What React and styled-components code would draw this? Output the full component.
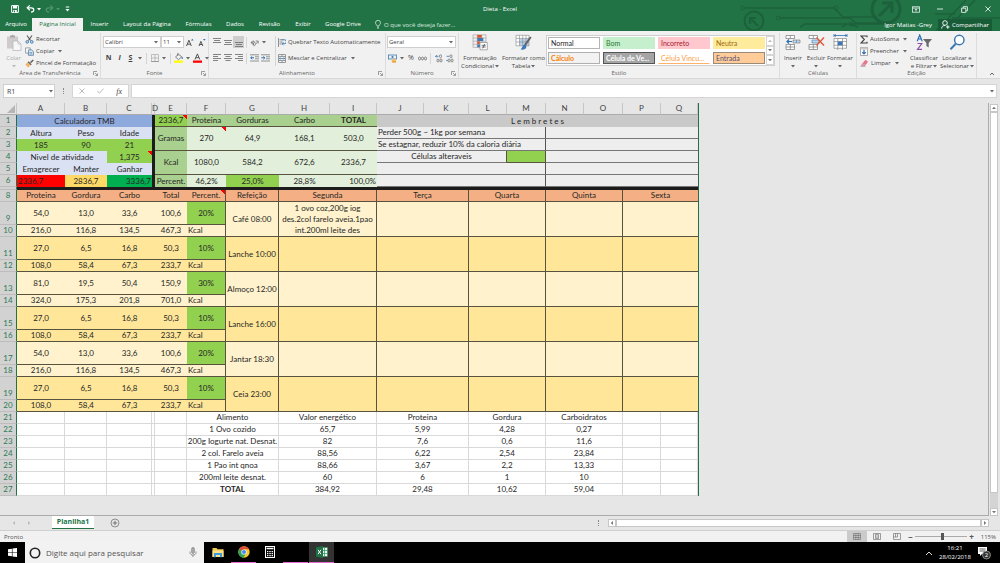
import React from "react";
import styled, { createGlobalStyle } from "styled-components";

const UI = `"Open Sans", "Noto Sans", sans-serif`;
const SHEET = `Lato, "Open Sans", sans-serif`;

const COLUMNS = [
  ["A", 48], ["B", 42], ["C", 45], ["D", 3], ["E", 32], ["F", 39],
  ["G", 53], ["H", 51], ["I", 47], ["J", 47], ["K", 45], ["L", 38],
  ["M", 39], ["N", 38], ["O", 39], ["P", 38], ["Q", 37],
];

const MEALS = [
  { name: "Café 08:00", grams: ["54,0", "13,0", "33,6", "100,6"], kcal: ["216,0", "116,8", "134,5", "467,3"], pct: "20%", monday: "1 ovo coz,200g iog\ndes.2col farelo aveia.1pao\nint.200ml leite des" },
  { name: "Lanche 10:00", grams: ["27,0", "6,5", "16,8", "50,3"], kcal: ["108,0", "58,4", "67,3", "233,7"], pct: "10%" },
  { name: "Almoço 12:00", grams: ["81,0", "19,5", "50,4", "150,9"], kcal: ["324,0", "175,3", "201,8", "701,0"], pct: "30%" },
  { name: "Lanche 16:00", grams: ["27,0", "6,5", "16,8", "50,3"], kcal: ["108,0", "58,4", "67,3", "233,7"], pct: "10%" },
  { name: "Jantar 18:30", grams: ["54,0", "13,0", "33,6", "100,6"], kcal: ["216,0", "116,8", "134,5", "467,3"], pct: "20%" },
  { name: "Ceia 23:00", grams: ["27,0", "6,5", "16,8", "50,3"], kcal: ["108,0", "58,4", "67,3", "233,7"], pct: "10%" },
];

const FOODS = [
  ["Alimento", "Valor energético", "Proteina", "Gordura", "Carboidratos"],
  ["1 Ovo cozido", "65,7", "5,99", "4,28", "0,27"],
  ["200g Iogurte nat. Desnat.", "82", "7,6", "0,6", "11,6"],
  ["2 col. Farelo aveia", "88,56", "6,22", "2,54", "23,84"],
  ["1 Pao int qnoa", "88,66", "3,67", "2,2", "13,33"],
  ["200ml leite desnat.", "60", "6", "1", "10"],
  ["TOTAL", "384,92", "29,48", "10,62", "59,04"],
];

const TABS = [
  ["Inserir", 33], ["Layout da Página", 62], ["Fórmulas", 41], ["Dados", 32],
  ["Revisão", 37], ["Exibir", 30], ["Google Drive", 50],
];

const STYLES = [
  { name: "Normal", bg: "#fff", color: "#222", edge: "#b5b5b5" },
  { name: "Bom", bg: "#c6efce", color: "#2a7a2e" },
  { name: "Incorreto", bg: "#ffc7ce", color: "#a8202c" },
  { name: "Neutra", bg: "#ffeb9c", color: "#9c6a10" },
  { name: "Cálculo", bg: "#f2f2f2", color: "#fa7d00", edge: "#b0b0b0", bold: true },
  { name: "Célula de Ve...", bg: "#a5a5a5", color: "#fff", edge: "#555", bold: true },
  { name: "Célula Vincu...", bg: "#fff", color: "#fa9a3c", under: "#ffb26b" },
  { name: "Entrada", bg: "#ffcc99", color: "#4f4f76", edge: "#9a8a78" },
];

/* ---------- icons ---------- */

const Svg = ({ w = 10, h = 10, box, children }) => (
  <svg width={w} height={h} viewBox={box || `0 0 ${w} ${h}`} fill="none" aria-hidden="true">
    {children}
  </svg>
);

const Caret = ({ color = "#666" }) => (
  <Svg w={4} h={3}><path d="M0 0h4L2 2.4z" fill={color} /></Svg>
);

const Launcher = () => (
  <Svg w={5} h={5}><path d="M.5 4V.5H4M2 2l2.3 2.3M4.5 2.3v2.2H2.3" stroke="#777" strokeWidth=".7" /></Svg>
);

const Lines = ({ y, widths, center, right }) => (
  <Svg w={8} h={10}>
    {widths.map((w, i) => {
      const x = right ? 8 - w : center ? (8 - w) / 2 : 0;
      return <rect key={i} x={x} y={y + i * 2} width={w} height=".9" fill="#777" />;
    })}
  </Svg>
);

const SaveIcon = () => (
  <Svg w={8} h={8}><path d="M.6.6h6.8v6.8H.6z" stroke="#fff" strokeWidth="1" /><path d="M2 .8h4v2.6H2zM2.2 5h3.6v2.4H2.2z" fill="#fff" /><path d="M3 5.6h1v1.6H3z" fill="#217346" /></Svg>
);

const UndoIcon = ({ color = "#fff", flip }) => (
  <Svg w={9} h={8}>
    <g transform={flip ? "translate(9 0) scale(-1 1)" : undefined}>
      <path d="M1.5 2.8h3.7c3.6.2 3.4 4-.2 4.3" stroke={color} strokeWidth="1.2" />
      <path d="M3.8.4L1.2 2.8l2.6 2.4" stroke={color} strokeWidth="1.2" />
    </g>
  </Svg>
);

const CustomizeIcon = () => (
  <Svg w={5} h={6}><path d="M.8 1h3.4" stroke="#fff" /><path d="M.5 3h4L2.5 5.4z" fill="#fff" /></Svg>
);

const RibbonOptionsIcon = () => (
  <Svg w={8} h={7}><rect x=".5" y=".8" width="7" height="5.4" stroke="#e7f1eb" strokeWidth=".8" /><path d="M.5 2.1h7M4 5.6V3M2.8 4.1L4 2.9l1.2 1.2" stroke="#e7f1eb" strokeWidth=".8" /></Svg>
);
const MinimizeIcon = () => <Svg w={6} h={6}><path d="M0 3h6" stroke="#d5e6dc" /></Svg>;
const RestoreIcon = () => (
  <Svg w={7} h={7}><path d="M.6 2.2h4.2v4.2H.6zM2.2 2.2V.7h4.2v4.1H4.8" stroke="#e7f1eb" strokeWidth=".9" /></Svg>
);
const CloseIcon = () => <Svg w={6} h={6}><path d="M.4.4l5.2 5.2M5.6.4L.4 5.6" stroke="#e7f1eb" strokeWidth=".9" /></Svg>;

const BulbIcon = () => (
  <Svg w={6} h={9}><path d="M2 6c0-1.2-1.5-1.6-1.5-3.2a2.5 2.5 0 015 0C5.500 4.400 4 4.800 4 6zM2 7.200h2M2.300 8.300h1.400" stroke="#d7e8de" strokeWidth=".8" /></Svg>
);
const PersonIcon = () => (
  <Svg w={9} h={9}><circle cx="4" cy="3" r="2.3" stroke="#fff" strokeWidth=".9" /><path d="M.6 8.600C.6 6.500 2 5.500 4 5.500M5 7h3.600M6.800 5.200v3.600" stroke="#fff" strokeWidth=".9" /></Svg>
);

const PasteIcon = () => (
  <Svg w={16} h={17}><path d="M1 2.500h11v12H1z" fill="#cfcacb" /><path d="M4 3.500V1.500h1.500a1.200 1.200 0 012.200 0H9v2z" fill="#aaa5a6" /><path d="M7 7h5l3 3v6.500H7z" fill="#f7f7f7" stroke="#b9b9bf" strokeWidth=".8" /><path d="M12 7v3h3" stroke="#b9b9bf" strokeWidth=".8" /></Svg>
);
const CutIcon = () => (
  <Svg w={9} h={9}><path d="M2 .5l3.600 5M7 .5L3.400 5.500" stroke="#555" strokeWidth="1.100" /><circle cx="2.200" cy="6.900" r="1.300" stroke="#3d78b5" strokeWidth="1" /><circle cx="6.800" cy="6.900" r="1.300" stroke="#3d78b5" strokeWidth="1" /></Svg>
);
const CopyIcon = () => (
  <Svg w={9} h={9}><path d="M.6.9h4.600v5.200H.6z" fill="#fff" stroke="#7f8a96" strokeWidth=".8" /><path d="M3.400 2.900h3.200l1.800 1.700v3.700h-5z" fill="#dce9f5" stroke="#55789c" strokeWidth=".8" /><path d="M4.500 5.500h2.600M4.500 6.900h2.600" stroke="#3d78b5" strokeWidth=".6" /></Svg>
);
const BrushIcon = () => (
  <Svg w={9} h={9}><path d="M8.300 1L5.500 3.600" stroke="#666" strokeWidth="1.600" /><path d="M3.500 2.200l3.200 3.200-1 .8-3-3z" fill="#555" /><path d="M2.600 3.300L5.500 6 3.200 8.500.4 5.600z" fill="#f0b168" /></Svg>
);

const GrowIcon = ({ down }) => (
  <Svg w={8} h={9}><path d={down ? "M1 8l1.900-4.600L4.800 8M1.700 6.500h2.400" : "M.5 8l2.400-5.800L5.300 8M1.300 6.200h3.200"} stroke="#444" strokeWidth=".9" /><path d={down ? "M5 1h2.600L6.300 2.700z" : "M5 2.600h2.600L6.300.8z"} fill="#2b6fb3" /></Svg>
);
const BorderIcon = () => (
  <Svg w={8} h={8}><path d="M.5.5h7v7h-7zM4 .5v7M.5 4h7" stroke="#aaa" strokeWidth=".7" /><path d="M.2 7.500h7.600" stroke="#999" /></Svg>
);
const FillIcon = () => (
  <Svg w={10} h={10}><path d="M4.500 1.200L1.500 4l3 2.600 3.200-2.800zM3.800 0v3" stroke="#666" strokeWidth=".8" /><path d="M8 3.500c1.200 1.400 1.200 2.300.3 2.500-.9-.1-.9-1 -.3-2.500z" fill="#2b6fb3" /><path d="M0 7.500h9v2.300H0z" fill="#ffff00" /></Svg>
);
const FontColorIcon = () => (
  <Svg w={9} h={10}><path d="M2 6.500l2.400-5.600 2.400 5.600M2.800 4.700H6" stroke="#555" strokeWidth="1" /><path d="M0 7.500h9v2.300H0z" fill="#f00" /></Svg>
);
const OrientationIcon = () => (
  <Svg w={9} h={9}><path d="M1 4.500l3 2.800M2.800 2.600l2.800 2.600M1.200 4.600c0-1.800 3-.2 2.400 2" stroke="#555" strokeWidth=".9" /><path d="M4 8.300l4-5M8.200 5.500V3H5.700" stroke="#777" strokeWidth=".8" /></Svg>
);
const IndentIcon = ({ out }) => (
  <Svg w={9} h={8}><path d="M0 .8h9M5 2.800h4M5 4.800h4M0 7h9" stroke="#888" strokeWidth=".9" /><path d={out ? "M4 3.800H.8M2.200 2.400L.7 3.800l1.500 1.400" : "M.3 3.800h3.400M2.400 2.400l1.500 1.400-1.500 1.400"} stroke="#2b6fb3" strokeWidth="1" /></Svg>
);
const WrapIcon = () => (
  <Svg w={8} h={9}><path d="M.5 0v9M1.500 1.800h3.200M1.500 4h3M1.500 6h2" stroke="#777" strokeWidth=".8" /><path d="M3.500 1.800h3a1.200 1.200 0 010 3.900H4.300M5.400 4.300L4 5.700 5.400 7" stroke="#2b6fb3" strokeWidth=".9" /></Svg>
);
const MergeIcon = () => (
  <Svg w={8} h={9}><path d="M.5.5h7v8h-7zM.5 2.500h7M.5 6.500h7M4 .5v2M4 6.500v2" stroke="#777" strokeWidth=".7" /><path d="M1.300 4.500h5.400M2.400 3.500l-1.100 1 1.100 1M5.600 3.500l1.100 1-1.100 1" stroke="#2b6fb3" strokeWidth=".7" /></Svg>
);
const MoneyIcon = () => (
  <Svg w={9} h={9}><rect x=".5" y="1" width="8" height="4" stroke="#3d78b5" strokeWidth=".8" /><circle cx="4.500" cy="3" r="1.100" fill="#3d78b5" /><ellipse cx="6" cy="6" rx="2.400" ry="1" fill="#f3bf63" /><ellipse cx="6" cy="7.700" rx="2.400" ry="1" fill="#e9a53c" /></Svg>
);
const DecimalIcon = ({ less }) => (
  <Svg w={8} h={9}><rect x={less ? 4 : 4.500} y=".8" width="2" height="2.800" rx="1" stroke="#666" strokeWidth=".7" /><rect x="2" y="5" width="2" height="3" rx="1" stroke="#666" strokeWidth=".7" /><rect x="5" y="5" width="2" height="3" rx="1" stroke="#666" strokeWidth=".7" /><path d={less ? "M.3 6.500h1.400M.6 2.300h2.600" : "M3.500 2.300H.6M1.700 1.200L.6 2.300l1.100 1.100"} stroke="#2b6fb3" strokeWidth=".8" /></Svg>
);

const CondIcon = () => (
  <Svg w={16} h={17}><path d="M1 .8h13v12.600H1zM1 4h13M1 7.200h13M1 10.300h13M5.300.8v12.600M9.700.8v12.600" stroke="#999" strokeWidth=".6" /><path d="M5.300 1h4.400v2.800H5.300zM5.300 7.300h2.500V10H5.300z" fill="#d9532f" /><path d="M5.300 4.100h6v2.800h-6zM5.300 10.400h3v2.800h-3z" fill="#3d78b5" /><path d="M8 8.500h7.300v7.300H8z" fill="#fff" stroke="#888" strokeWidth=".7" /><path d="M9.700 11.300h4M9.700 13h4M12.700 10l-2 4.400" stroke="#444" strokeWidth=".7" /></Svg>
);
const FormatTableIcon = () => (
  <Svg w={17} h={17}><path d="M1 1.300h13v10.500H1z" fill="#fff" /><path d="M4.500 4.500H14v7.300H4.500z" fill="#b8d2ec" /><path d="M1 1.300h13v10.500H1zM1 4.400h13M1 8h13M4.500 1.300v10.500M7.700 1.300v10.500M11 1.300v10.500" stroke="#888" strokeWidth=".6" /><path d="M15.800 3L10 11.200" stroke="#666" strokeWidth="2" /><path d="M9.500 10.500c2 .2 2.300 2 1.500 3.500-1 1.700-4 2-5.500 1.300 1.800-.8 1.500-4 4-4.800z" fill="#3d78b5" /></Svg>
);
const InsertCellsIcon = () => (
  <Svg w={16} h={17}><path d="M1 1.500h8.500v3H1zM5.300 1.500v3M1 10.500h8.500v5H1zM5.300 10.500v5M1 13h8.500" fill="#fff" stroke="#777" strokeWidth=".7" /><path d="M8 6h7v3H8z" fill="#bdd6ee" stroke="#777" strokeWidth=".6" /><path d="M11.500 6v3" stroke="#777" strokeWidth=".6" /><path d="M7 7.500H2M4 5.500l-2 2 2 2" stroke="#2b6fb3" strokeWidth="1.200" /></Svg>
);
const DeleteCellsIcon = () => (
  <Svg w={17} h={17}><path d="M1 1.500h8.500v3H1zM5.300 1.500v3M1 10.500h8.500v5H1zM5.300 10.500v5M1 13h8.500" fill="#fff" stroke="#777" strokeWidth=".7" /><path d="M4 6h7v3H4z" fill="#bdd6ee" stroke="#3d78b5" strokeWidth=".6" /><path d="M8.500 3.500l7.500 8M16 3.500l-7.500 8" stroke="#dd5a38" strokeWidth="1.400" /></Svg>
);
const FormatCellsIcon = () => (
  <Svg w={15} h={17}><path d="M1 1.500h13M1 0v3M14 0v3M3 .5l-1.500 1L3 2.500M12 .5l1.500 1-1.500 1" stroke="#2b6fb3" strokeWidth=".8" /><path d="M1 4.500h12.500v9.500l-3 2-2-1.500H1z" fill="#fff" /><path d="M1 4.500h12.500v9.800H1zM1 7.500h12.500M1 11.300h12.500M4.800 4.500v11.500M9.500 4.500v11.500" stroke="#888" strokeWidth=".7" /><path d="M4.800 7.500h4.700v3.800H4.800z" fill="#3d78b5" /></Svg>
);
const SumIcon = () => <Svg w={8} h={9}><path d="M7 2.300V1H1l3.300 3.500L1 8h6V6.700" stroke="#444" strokeWidth="1.200" /></Svg>;
const DownFillIcon = () => (
  <Svg w={8} h={9}><path d="M.5.5h7v8h-7z" fill="#fff" stroke="#888" strokeWidth=".7" /><path d="M.5.500h7v2h-7z" fill="#c9c9c9" /><path d="M4 2.800v4M2.200 5.200L4 7l1.800-1.800" stroke="#2b6fb3" strokeWidth="1.200" /></Svg>
);
const EraserIcon = () => (
  <Svg w={9} h={8}><path d="M5.500.8l2.500 2-2.600 3.400-2.800-2z" fill="#e5738a" /><path d="M2.200 4.500L5 6.500H1.500z" fill="#f3b3c0" stroke="#d0607a" strokeWidth=".5" /><path d="M.5 7.300h5" stroke="#888" strokeWidth=".7" /></Svg>
);
const SortIcon = () => (
  <Svg w={17} h={17}><path d="M1.200 7.200L3.700 1l2.500 6.200M2 5h3.400" stroke="#2b6fb3" strokeWidth="1.200" /><path d="M1.500 9.500h4.300L1.500 15.300h4.500" stroke="#8a52a8" strokeWidth="1.200" /><path d="M7 5h9l-3.300 4v4.500l-2.300-1.500V9z" fill="#6a6a6a" /></Svg>
);
const FindIcon = () => (
  <Svg w={17} h={17}><circle cx="10.300" cy="6" r="4.700" fill="#fff" stroke="#3d78b5" strokeWidth="1.500" /><path d="M7 9.500L1.500 15.300" stroke="#3d78b5" strokeWidth="2" /></Svg>
);

const FolderIcon = () => (
  <Svg w={12} h={11}><path d="M.5 1h4l1 1.300h6V10H.5z" fill="#f5ca55" /><path d="M.5 3.500h11V10H.5z" fill="#fbe08a" /><path d="M2 6h8v4.300H8V8H4v2.300H2z" fill="#3d9bdc" /></Svg>
);
const ChromeIcon = () => (
  <Svg w={12} h={12}><circle cx="6" cy="6" r="5.700" fill="#f6c927" /><path d="M6 6L1 3.300A5.700 5.700 0 0111 3.300H6z" fill="#dd4b3e" /><path d="M1 3.300A5.700 5.700 0 005.500 11.700L8 7.500 6 6z" fill="#2ea25a" /><circle cx="6" cy="6" r="2.600" fill="#fff" /><circle cx="6" cy="6" r="2" fill="#4285f4" /></Svg>
);
const CalcIcon = () => (
  <Svg w={10} h={12}><rect x=".5" y=".5" width="9" height="11" stroke="#fff" /><path d="M1.500 2.500h7" stroke="#fff" strokeWidth="1.500" />{[5, 7, 9].map((y) => [2, 4.300, 6.600].map((x) => <rect key={`${x}-${y}`} x={x} y={y} width="1.400" height="1.200" fill="#fff" />))}</Svg>
);
const ExcelIcon = () => (
  <Svg w={12} h={12}><path d="M6 1.500h5.500v9H6z" fill="#e9f5ee" stroke="#2f8f5b" strokeWidth=".7" /><path d="M8.500 1.500v9M6 4.500h5.500M6 7.500h5.500" stroke="#2f8f5b" strokeWidth=".7" /><path d="M0 1.300L7 0v12L0 10.700z" fill="#1e7145" /><path d="M2 3.800l3 4.400M5 3.800L2 8.200" stroke="#fff" strokeWidth="1" /></Svg>
);
const WindowsIcon = () => (
  <Svg w={9} h={9}><path d="M0 1.300L3.900.7v3.500H0zM4.500.6L9 0v4.200H4.500zM0 4.800h3.900v3.500L0 7.700zM4.500 4.800H9V9l-4.500-.6z" fill="#fff" /></Svg>
);
const MicIcon = () => (
  <Svg w={8} h={11}><rect x="2.600" y=".5" width="2.800" height="6" rx="1.400" fill="#aaa" stroke="#777" strokeWidth=".6" /><path d="M1 4.500v1c0 3.500 6 3.500 6 0v-1M4 8.300V10" stroke="#777" strokeWidth=".8" /></Svg>
);

/* ---------- base ---------- */

const GlobalStyle = createGlobalStyle`
  * { box-sizing: border-box; }
  body {
    margin: 0;
    background: #e6e6e6;
    font-family: ${UI};
    font-size: 6px;
    color: #444;
  }
  svg { display: block; flex: none; }
  button, input, select {
    margin: 0;
    padding: 0;
    border: none;
    border-radius: 0;
    background: none;
    font: inherit;
    color: inherit;
    outline: none;
  }
`;

const App = styled.div`
  min-height: 100vh;
  display: flex;
  flex-direction: column;
`;

/* ---------- header ---------- */

const Header = styled.header`
  position: relative;
  background: #217346;
  color: #fff;
`;

const Circuit = styled.svg`
  position: absolute;
  top: 0;
  right: 0;
`;

const TitleBar = styled.div`
  position: relative;
  display: grid;
  grid-template-columns: 1fr auto 1fr;
  align-items: center;
  height: 18px;
`;

const QuickAccess = styled.div`
  display: flex;
  align-items: center;
  gap: 3px;
  padding-left: 11px;
`;

const QuickButton = styled.button`
  display: flex;
  align-items: center;
  gap: 2px;
  margin-right: ${(p) => p.$after || 0}px;
`;

const WindowButtons = styled.div`
  display: flex;
  justify-content: flex-end;
`;

const WindowButton = styled.button`
  width: 24px;
  height: 16px;
  display: grid;
  place-items: center;
`;

const TabBar = styled.nav`
  position: relative;
  display: flex;
  align-items: stretch;
  height: 13px;
`;

const Tab = styled.button`
  width: ${(p) => p.$width}px;
  line-height: 13px;
  text-align: center;
  white-space: nowrap;
  color: ${(p) => (p.$active ? "#217346" : "#fff")};
  background: ${(p) => (p.$active ? "#f1f1f1" : "transparent")};
`;

const TellMe = styled.button`
  display: flex;
  align-items: center;
  gap: 3px;
  padding-left: 7px;
  color: #d7e8de;
`;

const Account = styled.div`
  margin-left: auto;
  display: flex;
  align-items: center;
  gap: 6px;
  padding-right: 8px;
`;

const ShareButton = styled.button`
  display: flex;
  align-items: center;
  justify-content: center;
  gap: 2px;
  width: 54px;
  height: 12px;
  background: #185c37;
`;

/* ---------- ribbon ---------- */

const Ribbon = styled.section`
  display: flex;
  height: 48px;
  padding-top: 2px;
  background: #f1f1f1;
  border-bottom: 1px solid #d8d8d8;
`;

const Group = styled.div`
  flex: none;
  display: flex;
  flex-direction: column;
  width: ${(p) => p.$width}px;
  border-right: 1px solid #dcdcdc;
`;

const GroupBody = styled.div`
  display: flex;
  height: 36px;
  padding-left: ${(p) => p.$left || 0}px;
`;

const GroupCaption = styled.div`
  display: grid;
  grid-template-columns: 10px 1fr 10px;
  align-items: center;
  height: 9px;
  color: #666;
  line-height: 9px;
  text-align: center;

  svg { justify-self: center; }
`;

const Stack = styled.div`
  flex: none;
  display: flex;
  flex-direction: column;
  gap: ${(p) => p.$gap || 0}px;
  width: ${(p) => (p.$width ? `${p.$width}px` : "auto")};
  padding-top: ${(p) => p.$top || 0}px;
`;

const Line = styled.div`
  display: flex;
  align-items: center;
  height: 12px;
`;

const SmallButton = styled.button`
  display: flex;
  align-items: center;
  gap: 2px;
  height: 12px;
  white-space: nowrap;

  svg + span { margin-right: 2px; }
`;

const IconButton = styled.button`
  width: ${(p) => p.$width || 11}px;
  height: 12px;
  display: grid;
  place-items: center;
  background: ${(p) => (p.$on ? "#cdcdcd" : "transparent")};
  font-size: 7px;
  line-height: 12px;
  font-weight: ${(p) => (p.$bold ? 700 : 400)};
  font-style: ${(p) => (p.$italic ? "italic" : "normal")};
  text-decoration: ${(p) => (p.$underline ? "underline" : "none")};
`;

const CaretButton = styled(IconButton)`
  width: 8px;
`;

const Divider = styled.span`
  width: 1px;
  height: ${(p) => p.$height || 11}px;
  margin: 0 2px;
  background: #d5d5d5;
`;

const BigButton = styled.button`
  flex: none;
  display: flex;
  flex-direction: column;
  align-items: center;
  width: ${(p) => p.$width}px;
  padding-top: 1px;
  color: ${(p) => (p.$dim ? "#aaa" : "#444")};
  line-height: 8px;
  white-space: nowrap;

  > svg:first-child { margin-bottom: 3px; }
  > svg:last-child { margin-top: 3px; }
`;

const WithCaret = styled.span`
  display: flex;
  align-items: center;
  gap: 1px;
`;

const SelectBox = styled.label`
  position: relative;
  display: flex;
  align-items: center;
  width: ${(p) => p.$width}px;
  height: 12px;
  background: #fff;
  border: 1px solid #cfcfcf;

  select {
    width: 100%;
    height: 10px;
    padding-left: 1px;
    appearance: none;
    line-height: 10px;
  }

  svg {
    position: absolute;
    right: 2px;
    pointer-events: none;
  }
`;

const Gallery = styled.div`
  display: flex;
  height: 31px;
  margin-top: 2px;
  border: 1px solid #cfcfcf;
  background: #fff;
`;

const GalleryGrid = styled.div`
  display: grid;
  grid-template-columns: repeat(4, 52px);
  grid-auto-rows: 12px;
  gap: 3px;
  padding: 1px;
`;

const StyleButton = styled.button`
  padding-left: 2px;
  text-align: left;
  font-family: ${SHEET};
  font-size: 7px;
  line-height: 9px;
  white-space: nowrap;
  color: ${(p) => p.$color};
  background: ${(p) => p.$bg};
  font-weight: ${(p) => (p.$bold ? 700 : 400)};
  border: 1px solid ${(p) => p.$edge || "transparent"};
  border-bottom-color: ${(p) => p.$under || p.$edge || "transparent"};
`;

const GalleryScroll = styled.div`
  display: grid;
  grid-template-rows: repeat(3, 1fr);
  width: 8px;

  button {
    display: grid;
    place-items: center;
    border: 1px solid #d5d5d5;
  }
`;

const Collapse = styled.button`
  margin: auto 5px 1px auto;
`;

/* ---------- formula bar ---------- */

const FormulaBar = styled.section`
  display: flex;
  align-items: flex-start;
  height: 24px;
  padding: 5px 3px 0;
`;

const NameBox = styled.div`
  display: flex;
  align-items: center;
  width: 52px;
  height: 14px;
  padding: 0 2px 0 3px;
  background: #fff;
  border: 1px solid #cfcfcf;

  input { width: 42px; font-size: 7px; }
`;

const Dots = styled.span`
  align-self: center;
  width: 1px;
  height: 6px;
  border-left: 1px dotted #888;
`;

const FormulaDots = styled(Dots)`
  align-self: flex-start;
  margin: 4px 8px;
`;

const FormulaActions = styled.div`
  display: flex;
  align-items: center;
  justify-content: space-around;
  width: 57px;
  height: 14px;
  background: #fff;
  border: 1px solid #d5d5d5;
  font-family: "Liberation Serif", serif;
  font-size: 8px;
  font-style: italic;
`;

const FormulaField = styled.div`
  flex: 1;
  display: flex;
  align-items: center;
  height: 14px;
  margin-left: 2px;
  padding-right: 2px;
  background: #fff;
  border: 1px solid #d5d5d5;

  input { flex: 1; }
`;

/* ---------- sheet ---------- */

const Workspace = styled.main`
  flex: 1;
  display: flex;
`;

const SheetArea = styled.div`
  flex: 1;
  border-right: 1px solid #ababab;
  border-bottom: 1px solid #ababab;
`;

const Sheet = styled.table`
  width: 699px;
  table-layout: fixed;
  border-collapse: separate;
  border-spacing: 0;
  border-right: 1px solid #217346;
  font-family: ${SHEET};
  font-size: 8px;
  line-height: 11px;
  color: #262626;

  th, td {
    padding: 0;
    font-weight: 400;
    white-space: nowrap;
  }
`;

const ColHead = styled.th`
  height: 12px;
  color: #444;
  background: #e6e6e6;
  border-right: 1px solid #c6c6c6;
  border-bottom: 1px solid #ababab;
`;

const RowHead = styled.th`
  height: ${(p) => p.$height}px;
  vertical-align: bottom;
  line-height: ${(p) => (p.$height < 11 ? 1 : 11)}px;
  color: #2f7a55;
  background: #d2d2d2;
  border-right: 1px solid #217346;
  border-bottom: 1px solid #bdbdbd;
`;

const INK = "#57533f";

/* filled cells hide the gridlines unless a border colour is given */
const edge = (color, bg) => {
  if (color) return `1px solid ${color}`;
  return bg ? "none" : "1px solid #d9d9d9";
};

const Cell = styled.td`
  text-align: ${(p) => p.$align || "center"};
  vertical-align: middle;
  background: ${(p) => p.$bg || "#fff"};
  border-bottom: ${(p) => edge(p.$bottom, p.$bg)};
  border-right: ${(p) => edge(p.$right, p.$bg)};

  &&& {
    padding: 0 ${(p) => (p.$align ? 1 : 0)}px;
    font-weight: ${(p) => (p.$bold ? 700 : 400)};
    white-space: ${(p) => (p.$wrap ? "pre" : "nowrap")};
  }
`;

/* red corner shown on cells that carry a comment */
const NotedCell = styled(Cell)`
  background: linear-gradient(45deg, transparent 50%, #f00 50%) top right / 4px 4px no-repeat
    ${(p) => p.$bg};
`;

const ScrollColumn = styled.div`
  display: flex;
  flex-direction: column;
  width: 11px;
  padding: 1px 2px 0 1px;
`;

const ScrollButton = styled.button`
  flex: none;
  width: 8px;
  height: 8px;
  display: grid;
  place-items: center;
  background: #fff;
  border: 1px solid #c6c6c6;
`;

const ScrollTrackV = styled.div`
  flex: 1;
  padding-bottom: 15px;
  background: #d4d4d4;
`;

const ScrollThumb = styled.div`
  height: 100%;
  background: #fff;
  border: 1px solid #c6c6c6;
`;

const SheetTabs = styled.div`
  display: flex;
  align-items: stretch;
  height: 15px;
  padding: 0 11px 0 12px;
  border-bottom: 1px solid #cfcfcf;
`;

const TabArrows = styled.div`
  display: flex;
  align-items: center;
  gap: 11px;
  width: 40px;
`;

const SheetTab = styled.button`
  width: 42px;
  height: 13px;
  background: #fff;
  border-bottom: 1px solid #217346;
  color: #217346;
  font-size: 7px;
  font-weight: 700;
  line-height: 12px;
`;

const AddSheet = styled.button`
  margin-left: 16px;
`;

const ScrollRow = styled.div`
  display: flex;
  align-items: center;
  width: 40%;
  margin-left: auto;

  ${Dots} { margin-right: 9px; }
`;

const ScrollTrackH = styled.div`
  flex: 1;
  height: 8px;
`;

const StatusBar = styled.footer`
  display: flex;
  align-items: center;
  height: 11px;
  padding: 0 4px;
  background: #f1f1f1;
  color: #555;
`;

const ViewButton = styled.button`
  width: 20px;
  height: 11px;
  display: grid;
  place-items: center;
  background: ${(p) => (p.$on ? "#cbcbcb" : "transparent")};
`;

const Views = styled.div`
  display: flex;
  margin-left: auto;
`;

const Zoom = styled.div`
  display: flex;
  align-items: center;
  gap: 1px;
  width: 89px;

  button { width: 7px; font-size: 8px; font-weight: 700; line-height: 9px; }

  input {
    width: 52px;
    height: 9px;
    appearance: none;
    background: linear-gradient(#aaa, #aaa) center / 100% 1px no-repeat;
  }

  input::-webkit-slider-thumb {
    appearance: none;
    width: 3px;
    height: 7px;
    background: #555;
  }

  output { margin-left: auto; }
`;

/* ---------- taskbar ---------- */

const Taskbar = styled.div`
  display: flex;
  height: 21px;
  background: #000;
  color: #fff;
`;

const StartButton = styled.button`
  width: 25px;
  display: grid;
  place-items: center;
`;

const Search = styled.div`
  display: flex;
  align-items: center;
  gap: 5px;
  width: 179px;
  padding: 0 7px 0 4px;
  background: #f2f2f2;
  color: #555;

  input { flex: 1; min-width: 0; font-size: 8px; }
  input::placeholder { color: #555; opacity: 1; }
`;

const Apps = styled.div`
  display: flex;
  gap: 1px;
  padding-left: 1px;
`;

const AppButton = styled.button`
  width: 25px;
  display: grid;
  place-items: center;
  background: ${(p) => (p.$active ? "#333" : "transparent")};
  border-bottom: 1px solid ${(p) => (p.$open ? "#e56bd0" : "transparent")};
`;

const Tray = styled.div`
  display: flex;
  align-items: center;
  margin-left: auto;
  padding-right: 8px;
`;

const Clock = styled.time`
  width: 44px;
  font-size: 6px;
  line-height: 9px;
  text-align: center;
`;

/* ---------- pieces ---------- */

const Caption = ({ children, launcher }) => (
  <GroupCaption>
    <span />
    <span>{children}</span>
    {launcher ? <Launcher /> : <span />}
  </GroupCaption>
);

const DropDown = ({ label, value, width }) => (
  <SelectBox $width={width}>
    <select aria-label={label} defaultValue={value}>
      <option>{value}</option>
    </select>
    <Caret />
  </SelectBox>
);

const Tool = ({ icon, label, caret }) => (
  <SmallButton>
    {icon}
    <span>{label}</span>
    {caret && <Caret />}
  </SmallButton>
);

const Arrow = ({ dir, color = "#777" }) => {
  const d = { left: "M3 0v4L.8 2z", right: "M1 0v4l2.200-2z", up: "M0 3h4L2 .8z", down: "M0 1h4L2 3.200z" };
  return <Svg w={4} h={4}><path d={d[dir]} fill={color} /></Svg>;
};

const HeaderArea = () => (
  <Header>
    <Circuit width="270" height="31" viewBox="0 0 270 31" fill="none" stroke="#1c613b" aria-hidden="true">
      <path d="M16 8h88l9 9h34M50 18h70l6 5h34M70 27l5-3h45l8 3M112 27l5-3h42l10 3" strokeWidth="1.500" />
      <circle cx="13" cy="8" r="2" /><circle cx="106" cy="8" r="2" /><circle cx="48" cy="18" r="2" /><circle cx="121" cy="24" r="2" />
      <circle cx="24" cy="21" r="9.500" strokeWidth="2" />
      <path d="M28 26l-8-8M20 24v-6h6" strokeWidth="2" />
      <circle cx="156" cy="9" r="14" strokeWidth="3" />
      <path d="M149 16l13-13M152 3h10v10" strokeWidth="3" />
      <path d="M206 31l30-31M215 31l30-31M222 18h48M205 14h20" strokeWidth="1.500" />
    </Circuit>
    <TitleBar>
      <QuickAccess>
        <QuickButton $after={4} aria-label="Salvar"><SaveIcon /></QuickButton>
        <QuickButton $after={1} aria-label="Desfazer"><UndoIcon /><Caret color="#fff" /></QuickButton>
        <QuickButton $after={2} aria-label="Refazer"><UndoIcon color="#4f9470" flip /><Caret color="#4f9470" /></QuickButton>
        <QuickButton aria-label="Personalizar"><CustomizeIcon /></QuickButton>
      </QuickAccess>
      <span>Dieta - Excel</span>
      <WindowButtons>
        <WindowButton aria-label="Opções da faixa"><RibbonOptionsIcon /></WindowButton>
        <WindowButton aria-label="Minimizar"><MinimizeIcon /></WindowButton>
        <WindowButton aria-label="Restaurar"><RestoreIcon /></WindowButton>
        <WindowButton aria-label="Fechar"><CloseIcon /></WindowButton>
      </WindowButtons>
    </TitleBar>
    <TabBar>
      <Tab $width={32}>Arquivo</Tab>
      <Tab $width={51} $active>Página Inicial</Tab>
      {TABS.map(([name, width]) => (
        <Tab key={name} $width={width}>{name}</Tab>
      ))}
      <TellMe><BulbIcon />O que você deseja fazer...</TellMe>
      <Account>
        <span>Igor Matias -Grey</span>
        <ShareButton><PersonIcon />Compartilhar</ShareButton>
      </Account>
    </TabBar>
  </Header>
);

const RibbonArea = () => (
  <Ribbon>
    <Group $width={101}>
      <GroupBody $left={2}>
        <BigButton $width={23} $dim><PasteIcon /><span>Colar</span><Caret color="#bbb" /></BigButton>
        <Stack>
          <Tool icon={<CutIcon />} label="Recortar" />
          <Tool icon={<CopyIcon />} label="Copiar" caret />
          <Tool icon={<BrushIcon />} label="Pincel de Formatação" />
        </Stack>
      </GroupBody>
      <Caption launcher>Área de Transferência</Caption>
    </Group>

    <Group $width={108}>
      <GroupBody $left={2}>
        <Stack $top={3} $gap={4}>
          <Line>
            <DropDown label="Fonte" value="Calibri" width={58} />
            <DropDown label="Tamanho" value="11" width={23} />
            <IconButton $width={12} aria-label="Aumentar fonte"><GrowIcon /></IconButton>
            <IconButton aria-label="Diminuir fonte"><GrowIcon down /></IconButton>
          </Line>
          <Line>
            <IconButton $bold>N</IconButton>
            <IconButton $italic $bold>I</IconButton>
            <IconButton $underline $bold>S</IconButton>
            <CaretButton aria-label="Sublinhado"><Caret /></CaretButton>
            <Divider />
            <IconButton aria-label="Bordas"><BorderIcon /></IconButton>
            <CaretButton aria-label="Mais bordas"><Caret /></CaretButton>
            <Divider />
            <IconButton aria-label="Preenchimento"><FillIcon /></IconButton>
            <CaretButton aria-label="Mais cores"><Caret /></CaretButton>
            <IconButton aria-label="Cor da fonte"><FontColorIcon /></IconButton>
            <CaretButton aria-label="Mais cores de fonte"><Caret /></CaretButton>
          </Line>
        </Stack>
      </GroupBody>
      <Caption launcher>Fonte</Caption>
    </Group>

    <Group $width={177}>
      <GroupBody $left={2}>
        <Stack $top={3} $gap={4} $width={62}>
          <Line>
            <IconButton aria-label="Em cima"><Lines y={1} widths={[8, 6, 8]} center /></IconButton>
            <IconButton aria-label="No meio"><Lines y={3} widths={[8, 6, 8]} center /></IconButton>
            <IconButton $on aria-label="Embaixo"><Lines y={5} widths={[8, 6, 8]} center /></IconButton>
            <Divider />
            <IconButton aria-label="Orientação"><OrientationIcon /></IconButton>
            <CaretButton aria-label="Mais orientações"><Caret /></CaretButton>
          </Line>
          <Line>
            <IconButton aria-label="À esquerda"><Lines y={1} widths={[8, 5, 8, 5]} /></IconButton>
            <IconButton aria-label="Centralizar"><Lines y={1} widths={[8, 5, 8, 5]} center /></IconButton>
            <IconButton aria-label="À direita"><Lines y={1} widths={[8, 5, 8, 5]} right /></IconButton>
            <Divider />
            <IconButton aria-label="Diminuir recuo"><IndentIcon out /></IconButton>
            <IconButton aria-label="Aumentar recuo"><IndentIcon /></IconButton>
          </Line>
        </Stack>
        <Stack $top={3}><Divider $height={30} /></Stack>
        <Stack $top={3} $gap={4}>
          <Line><Tool icon={<WrapIcon />} label="Quebrar Texto Automaticamente" /></Line>
          <Line><Tool icon={<MergeIcon />} label="Mesclar e Centralizar" caret /></Line>
        </Stack>
      </GroupBody>
      <Caption launcher>Alinhamento</Caption>
    </Group>

    <Group $width={73}>
      <GroupBody $left={1}>
        <Stack $top={3} $gap={4}>
          <Line><DropDown label="Formato de número" value="Geral" width={69} /></Line>
          <Line>
            <IconButton aria-label="Moeda"><MoneyIcon /></IconButton>
            <CaretButton aria-label="Mais moedas"><Caret /></CaretButton>
            <IconButton $width={10}>%</IconButton>
            <IconButton $width={12} aria-label="Milhares"><Svg w={9} h={5}><path d="M1.500 1a1 1.500 0 100 3 1 1.500 0 100-3M4.500 1a1 1.500 0 100 3 1 1.500 0 100-3M7.500 1a1 1.500 0 100 3 1 1.500 0 100-3" stroke="#666" strokeWidth=".8" /></Svg></IconButton>
            <Divider />
            <IconButton aria-label="Aumentar casas"><DecimalIcon /></IconButton>
            <IconButton aria-label="Diminuir casas"><DecimalIcon less /></IconButton>
          </Line>
        </Stack>
      </GroupBody>
      <Caption launcher>Número</Caption>
    </Group>

    <Group $width={321}>
      <GroupBody>
        <BigButton $width={42}>
          <CondIcon /><span>Formatação</span><WithCaret>Condicional<Caret /></WithCaret>
        </BigButton>
        <BigButton $width={45}>
          <FormatTableIcon /><span>Formatar como</span><WithCaret>Tabela<Caret /></WithCaret>
        </BigButton>
        <Gallery>
          <GalleryGrid>
            {STYLES.map((s) => (
              <StyleButton key={s.name} $bg={s.bg} $color={s.color} $edge={s.edge} $under={s.under} $bold={s.bold}>
                {s.name}
              </StyleButton>
            ))}
          </GalleryGrid>
          <GalleryScroll>
            <button aria-label="Acima"><Arrow dir="up" color="#bbb" /></button>
            <button aria-label="Abaixo"><Arrow dir="down" /></button>
            <button aria-label="Mais"><Arrow dir="down" /></button>
          </GalleryScroll>
        </Gallery>
      </GroupBody>
      <Caption>Estilo</Caption>
    </Group>

    <Group $width={77}>
      <GroupBody $left={1}>
        <BigButton $width={24}><InsertCellsIcon /><span>Inserir</span><Caret /></BigButton>
        <BigButton $width={22}><DeleteCellsIcon /><span>Excluir</span><Caret /></BigButton>
        <BigButton $width={26}><FormatCellsIcon /><span>Formatar</span><Caret /></BigButton>
      </GroupBody>
      <Caption>Células</Caption>
    </Group>

    <Group $width={120}>
      <GroupBody $left={3}>
        <Stack $width={48}>
          <Tool icon={<SumIcon />} label="AutoSoma" caret />
          <Tool icon={<DownFillIcon />} label="Preencher" caret />
          <Tool icon={<EraserIcon />} label="Limpar" caret />
        </Stack>
        <BigButton $width={32}>
          <SortIcon /><span>Classificar</span><WithCaret>e Filtrar<Caret /></WithCaret>
        </BigButton>
        <BigButton $width={34}>
          <FindIcon /><span>Localizar e</span><WithCaret>Selecionar<Caret /></WithCaret>
        </BigButton>
      </GroupBody>
      <Caption>Edição</Caption>
    </Group>
    <Collapse aria-label="Recolher">
      <Svg w={6} h={6}><path d="M1 4l2-2 2 2" stroke="#666" /></Svg>
    </Collapse>
  </Ribbon>
);

const CREAM = "#fff2cc";
const GOLD = "#ffe699";
const GREEN = "#92d050";
const LEAF = "#a9d08e";
const MINT = "#e2efda";
const BLUE = "#d9e1f2";
const SALMON = "#f4b084";
const GREY = "#eeeeee";
const BLACK = "#1c1c1c";

const NoteRow = ({ children }) => (
  <>
    <Cell colSpan={4} $align="left" $bg={GREY} $bottom="#777" $right="#555">{children}</Cell>
    <Cell colSpan={4} $bg={GREY} $bottom="#777" />
  </>
);

const TmbRows = () => (
  <>
    <tr>
      <RowHead $height={12}>1</RowHead>
      <Cell colSpan={3} $bg="#8ea9db">Calculadora TMB</Cell>
      <Cell rowSpan={6} $bg={BLACK} />
      <NotedCell $bg={GREEN} $bottom={INK}>2336,7</NotedCell>
      <Cell $bg={LEAF} $bottom={INK}>Proteina</Cell>
      <Cell $bg={LEAF} $bottom={INK}>Gorduras</Cell>
      <Cell $bg={LEAF} $bottom={INK}>Carbo</Cell>
      <Cell $bg={LEAF} $bottom={INK} $bold>TOTAL</Cell>
      <Cell colSpan={8} $bg="#c9c9c9">L e m b r e t e s</Cell>
    </tr>
    <tr>
      <RowHead $height={12}>2</RowHead>
      <Cell $bg={BLUE}>Altura</Cell>
      <Cell $bg={BLUE}>Peso</Cell>
      <Cell $bg={BLUE}>Idade</Cell>
      <Cell rowSpan={2} $bg={LEAF} $bottom={INK}>Gramas</Cell>
      <NotedCell rowSpan={2} $bg={MINT} $bottom={INK}>270</NotedCell>
      <Cell rowSpan={2} $bg={MINT} $bottom={INK}>64,9</Cell>
      <Cell rowSpan={2} $bg={MINT} $bottom={INK}>168,1</Cell>
      <Cell rowSpan={2} $bg={MINT} $bottom={INK}>503,0</Cell>
      <NoteRow>Perder 500g ~ 1kg por semana</NoteRow>
    </tr>
    <tr>
      <RowHead $height={12}>3</RowHead>
      <Cell $bg={GREEN}>185</Cell>
      <Cell $bg={GREEN}>90</Cell>
      <Cell $bg={GREEN}>21</Cell>
      <NoteRow>Se estagnar, reduzir 10% da caloria diária</NoteRow>
    </tr>
    <tr>
      <RowHead $height={12}>4</RowHead>
      <Cell colSpan={2} $bg={BLUE}>Nivel de atividade</Cell>
      <NotedCell $bg={GREEN}>1,375</NotedCell>
      <Cell rowSpan={2} $bg={LEAF} $bottom={INK}>Kcal</Cell>
      <Cell rowSpan={2} $bg={MINT} $bottom={INK}>1080,0</Cell>
      <Cell rowSpan={2} $bg={MINT} $bottom={INK}>584,2</Cell>
      <Cell rowSpan={2} $bg={MINT} $bottom={INK}>672,6</Cell>
      <Cell rowSpan={2} $bg={MINT} $bottom={INK}>2336,7</Cell>
      <Cell colSpan={3} $bg={GREY} $bottom="#777" $right={INK}>Células alteraveis</Cell>
      <Cell $bg={GREEN} $bottom={INK} $right={INK} />
      <Cell colSpan={4} $bg={GREY} $bottom="#777" />
    </tr>
    <tr>
      <RowHead $height={12}>5</RowHead>
      <Cell $bg={BLUE}>Emagrecer</Cell>
      <Cell $bg={BLUE}>Manter</Cell>
      <Cell $bg={BLUE}>Ganhar</Cell>
      <NoteRow />
    </tr>
    <tr>
      <RowHead $height={12}>6</RowHead>
      <Cell $bg="#ff0000" $align="left">2336,7</Cell>
      <Cell $bg="#ffd966">2836,7</Cell>
      <Cell $bg="#00b050" $align="right">3336,7</Cell>
      <Cell $bg={LEAF}>Percent.</Cell>
      <Cell $bg={MINT}>46,2%</Cell>
      <Cell $bg={GREEN}>25,0%</Cell>
      <Cell $bg={MINT}>28,8%</Cell>
      <Cell $bg={MINT} $align="right">100,0%</Cell>
      <NoteRow />
    </tr>
  </>
);

const MealRows = ({ meal, index }) => {
  const bg = index % 2 ? GOLD : CREAM;
  const row = 9 + index * 2;
  return (
    <>
      <tr>
        <RowHead $height={23}>{row}</RowHead>
        {meal.grams.slice(0, 3).map((v, i) => <Cell key={i} $bg={bg} $bottom={INK}>{v}</Cell>)}
        <Cell $bg={bg} $bottom={INK} />
        <Cell $bg={bg} $bottom={INK}>{meal.grams[3]}</Cell>
        <Cell $bg={GREEN} $bottom={INK} $right={INK}>{meal.pct}</Cell>
        <Cell rowSpan={2} $bg={bg} $bottom={INK} $right={INK}>{meal.name}</Cell>
        <Cell rowSpan={2} colSpan={2} $wrap $bg={bg} $bottom={INK} $right={INK}>{meal.monday}</Cell>
        <Cell rowSpan={2} colSpan={2} $bg={bg} $bottom={INK} $right={INK} />
        <Cell rowSpan={2} colSpan={2} $bg={bg} $bottom={INK} $right={INK} />
        <Cell rowSpan={2} colSpan={2} $bg={bg} $bottom={INK} $right={INK} />
        <Cell rowSpan={2} colSpan={2} $bg={bg} $bottom={INK} />
      </tr>
      <tr>
        <RowHead $height={12}>{row + 1}</RowHead>
        {meal.kcal.slice(0, 3).map((v, i) => <Cell key={i} $bg={bg} $bottom={INK}>{v}</Cell>)}
        <Cell $bg={bg} $bottom={INK} />
        <Cell $bg={bg} $bottom={INK}>{meal.kcal[3]}</Cell>
        <Cell $bg={bg} $bottom={INK} $right={INK} $align="left">Kcal</Cell>
      </tr>
    </>
  );
};

const SheetTable = () => (
  <Sheet>
    <colgroup>
      <col width="17" />
      {COLUMNS.map(([name, width]) => <col key={name} width={width} />)}
    </colgroup>
    <thead>
      <tr>
        <ColHead aria-label="Selecionar tudo">
          <Svg w={16} h={10}><path d="M15 1v8H7z" fill="#b5b5b5" /></Svg>
        </ColHead>
        {COLUMNS.map(([name]) => <ColHead key={name}>{name}</ColHead>)}
      </tr>
    </thead>
    <tbody>
      <TmbRows />
      <tr>
        <RowHead $height={3} />
        <Cell colSpan={17} $bg={BLACK} />
      </tr>
      <tr>
        <RowHead $height={12}>8</RowHead>
        <Cell $bg={SALMON} $bottom={INK}>Proteina</Cell>
        <Cell $bg={SALMON} $bottom={INK}>Gordura</Cell>
        <Cell $bg={SALMON} $bottom={INK}>Carbo</Cell>
        <Cell $bg={SALMON} $bottom={INK} />
        <Cell $bg={SALMON} $bottom={INK}>Total</Cell>
        <NotedCell $bg={SALMON} $bottom={INK} $right={INK}>Percent.</NotedCell>
        <Cell $bg={SALMON} $bottom={INK} $right={INK}>Refeição</Cell>
        {["Segunda", "Terça", "Quarta", "Quinta"].map((day) => (
          <Cell key={day} colSpan={2} $bg={SALMON} $bottom={INK} $right={INK}>{day}</Cell>
        ))}
        <Cell colSpan={2} $bg={SALMON} $bottom={INK}>Sexta</Cell>
      </tr>
      {MEALS.map((meal, i) => <MealRows key={meal.name} meal={meal} index={i} />)}
      {FOODS.map((food, i) => (
        <tr key={food[0]}>
          <RowHead $height={12}>{21 + i}</RowHead>
          <Cell /><Cell /><Cell /><Cell /><Cell />
          {food.map((v, j) => (
            <Cell key={j} colSpan={2} $bold={v === "TOTAL"}>{v}</Cell>
          ))}
          <Cell /><Cell />
        </tr>
      ))}
    </tbody>
  </Sheet>
);

const TaskbarArea = () => (
  <Taskbar>
    <StartButton aria-label="Iniciar"><WindowsIcon /></StartButton>
    <Search>
      <Svg w={12} h={12}><circle cx="6" cy="6" r="4.700" stroke="#222" strokeWidth="1.600" /></Svg>
      <input aria-label="Pesquisar" placeholder="Digite aqui para pesquisar" />
      <MicIcon />
    </Search>
    <Apps>
      <AppButton aria-label="Explorador"><FolderIcon /></AppButton>
      <AppButton $open aria-label="Chrome"><ChromeIcon /></AppButton>
      <AppButton aria-label="Calculadora"><CalcIcon /></AppButton>
      <AppButton $open aria-label="Aplicativo" />
      <AppButton $open $active aria-label="Excel"><ExcelIcon /></AppButton>
    </Apps>
    <Tray>
      <Svg w={8} h={6}><path d="M1 5l3-3 3 3" stroke="#ddd" /></Svg>
      <Clock>16:21<br />28/02/2018</Clock>
      <Svg w={15} h={14}>
        <path d="M1 1h9v7H5L3 10V8H1z" fill="#fff" />
        <path d="M2.500 3h6M2.500 5h6" stroke="#333" strokeWidth=".8" />
        <circle cx="9.500" cy="9" r="4" fill="#333" stroke="#aaa" strokeWidth=".7" />
        <text x="9.500" y="11.200" fontSize="6" textAnchor="middle" fill="#fff">2</text>
      </Svg>
    </Tray>
  </Taskbar>
);

const Excel = () => (
  <App>
    <GlobalStyle />
    <HeaderArea />
    <RibbonArea />
    <FormulaBar>
      <NameBox>
        <input aria-label="Caixa de nome" defaultValue="R1" />
        <Caret />
      </NameBox>
      <FormulaDots />
      <FormulaActions>
        <Svg w={6} h={6}><path d="M.5.5l5 5M5.500.5l-5 5" stroke="#bbb" /></Svg>
        <Svg w={7} h={6}><path d="M.5 3l2 2.300L6.500.6" stroke="#bbb" /></Svg>
        <span>fx</span>
      </FormulaActions>
      <FormulaField>
        <input aria-label="Fórmula" />
        <Caret />
      </FormulaField>
    </FormulaBar>
    <Workspace>
      <SheetArea><SheetTable /></SheetArea>
      <ScrollColumn>
        <ScrollButton aria-label="Rolar para cima"><Arrow dir="up" /></ScrollButton>
        <ScrollTrackV><ScrollThumb /></ScrollTrackV>
        <ScrollButton aria-label="Rolar para baixo"><Arrow dir="down" /></ScrollButton>
      </ScrollColumn>
    </Workspace>
    <SheetTabs>
      <TabArrows>
        <Arrow dir="left" color="#bbb" />
        <Arrow dir="right" color="#bbb" />
      </TabArrows>
      <SheetTab>Planilha1</SheetTab>
      <AddSheet aria-label="Nova planilha">
        <Svg w={10} h={10}><circle cx="5" cy="5" r="4" stroke="#777" strokeWidth=".8" /><path d="M5 2.800v4.400M2.800 5h4.400" stroke="#666" strokeWidth=".9" /></Svg>
      </AddSheet>
      <ScrollRow>
        <Dots />
        <ScrollButton aria-label="Rolar para a esquerda"><Arrow dir="left" /></ScrollButton>
        <ScrollTrackH><ScrollThumb /></ScrollTrackH>
        <ScrollButton aria-label="Rolar para a direita"><Arrow dir="right" /></ScrollButton>
      </ScrollRow>
    </SheetTabs>
    <StatusBar>
      <span>Pronto</span>
      <Views>
        <ViewButton $on aria-label="Normal"><Svg w={8} h={7}><path d="M.5.5h7v6h-7zM.5 2.500h7M.5 4.500h7M2.800.5v6M5.200.5v6" stroke="#777" strokeWidth=".7" /></Svg></ViewButton>
        <ViewButton aria-label="Layout da página"><Svg w={8} h={7}><path d="M.5.5h7v6h-7zM2.500 1.500h3v4h-3zM3.300 3h1.400M3.300 4.300h1.400" stroke="#777" strokeWidth=".7" /></Svg></ViewButton>
        <ViewButton aria-label="Quebra de página"><Svg w={8} h={7}><path d="M.5.5h7v6h-7zM.5 4h4V.5M2.500.5V4" stroke="#777" strokeWidth=".7" /></Svg></ViewButton>
      </Views>
      <Zoom>
        <button aria-label="Menos zoom">−</button>
        <input type="range" aria-label="Zoom" min="0" max="100" defaultValue="53" />
        <button aria-label="Mais zoom">+</button>
        <output>115%</output>
      </Zoom>
    </StatusBar>
    <TaskbarArea />
  </App>
);

export default Excel;
